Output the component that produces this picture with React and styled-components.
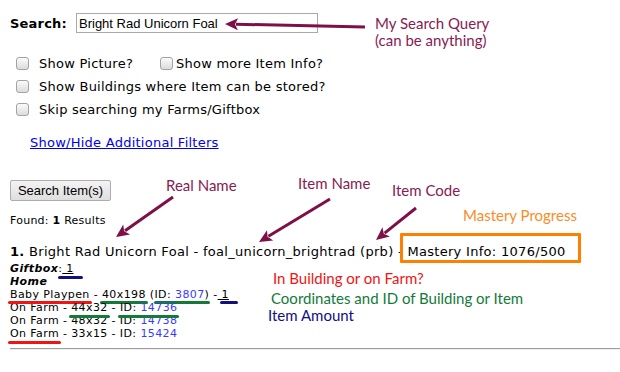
import React from 'react';
import styled, { createGlobalStyle } from 'styled-components';

const GlobalStyle = createGlobalStyle`
  html, body {
    margin: 0;
    padding: 0;
    background: #ffffff;
  }
`;

const Page = styled.div`
  position: relative;
  width: 620px;
  height: 372px;
  overflow: hidden;
  box-sizing: border-box;
  padding: 13px 0 0 10px;
  font-family: "DejaVu Sans", Verdana, sans-serif;
  color: #000;
`;

const SearchRow = styled.div`
  display: flex;
  align-items: center;
  height: 20px;
`;

const SearchLabel = styled.label`
  width: 66px;
  font-size: 13px;
  font-weight: bold;
  letter-spacing: 0.2px;
`;

const SearchInput = styled.input`
  width: 242px;
  height: 20px;
  box-sizing: border-box;
  margin: 0;
  padding: 0 2px;
  border: 1px solid #a9a9a9;
  font: 13px "Liberation Sans", Arial, sans-serif;
  color: #000;
  outline: none;
`;

const Options = styled.div`
  margin-top: 19px;
  padding-left: 6px;
  display: flex;
  flex-direction: column;
`;

const OptionRow = styled.div`
  display: flex;
  align-items: center;
  height: 23px;
  font-size: 13px;
  line-height: 16px;
  letter-spacing: 0.25px;
`;

const Option = styled.label`
  display: flex;
  align-items: center;
  width: ${(p) => (p.$width ? `${p.$width}px` : 'auto')};
`;

const Check = styled.input.attrs({ type: 'checkbox' })`
  appearance: none;
  box-sizing: border-box;
  width: 13px;
  height: 13px;
  margin: 0 ${(p) => (p.$tight ? 3 : 10)}px 0 0;
  border: 1px solid #a3a3a3;
  border-radius: 3px;
  background: linear-gradient(#fbfbfb, #dcdcdc);
`;

const FilterLink = styled.a`
  display: block;
  width: fit-content;
  margin: 14px 0 0 20px;
  font-size: 13px;
  line-height: 16px;
  letter-spacing: 0.25px;
  color: #0000ee;
  text-decoration: underline;
`;

const SearchButton = styled.button`
  display: block;
  width: 101px;
  height: 21px;
  margin: 29px 0 0;
  padding: 0;
  border: 1px solid #adadad;
  border-radius: 2px;
  background: linear-gradient(#f3f3f3, #dfdfdf);
  font: 13px "Liberation Sans", Arial, sans-serif;
  color: #000;
`;

const Found = styled.div`
  margin-top: 13px;
  font-size: 11px;
  line-height: 13px;
  letter-spacing: 0.25px;
`;

const ResultTitle = styled.div`
  margin-top: 17px;
  font-size: 13px;
  line-height: 16px;
  letter-spacing: 0.3px;
  white-space: nowrap;
`;

const Locations = styled.div`
  margin-top: 2px;
  font-size: 11px;
  line-height: 13px;
  letter-spacing: 0.4px;
  white-space: nowrap;
`;

const Heading = styled.span`
  font-weight: bold;
  font-style: italic;
`;

const Amount = styled.span`
  text-decoration: underline;
`;

const IdLink = styled.span`
  color: #3a3aff;
`;

const Divider = styled.hr`
  margin: 8px 0 0;
  border: 0;
  border-top: 1px solid #9d9d9d;
  border-bottom: 1px solid #eeeeee;
`;

/* annotation layer drawn over the screenshot */

const Mark = styled.span`
  position: relative;
  &::after {
    content: '';
    position: absolute;
    left: ${(p) => p.$l ?? -2}px;
    right: ${(p) => p.$r ?? -2}px;
    bottom: ${(p) => p.$b ?? -3}px;
    height: 3px;
    border-radius: 2px;
    background: ${(p) => p.$color};
  }
`;

const Mastery = styled.span`
  position: relative;
  &::after {
    content: '';
    position: absolute;
    left: -7px;
    right: -15px;
    top: -11px;
    bottom: -4px;
    border: 3px solid #ff7f00;
    border-radius: 1px;
  }
`;

const Callout = styled.span`
  position: absolute;
  left: ${(p) => p.$x}px;
  top: ${(p) => p.$y}px;
  font-family: Lato, "Open Sans", sans-serif;
  font-size: 15px;
  line-height: 17px;
  white-space: nowrap;
  color: ${(p) => p.$color || '#861c53'};
`;

const ArrowLayer = styled.svg`
  position: absolute;
  left: 0;
  top: 0;
  width: 620px;
  height: 372px;
  pointer-events: none;
`;

const RED = '#f01414';
const GREEN = '#137a3a';
const NAVY = '#10107f';
const ARROW = '#7d1147';

function Arrow({ from, to }) {
  const [x1, y1] = from;
  const [x2, y2] = to;
  const len = Math.hypot(x2 - x1, y2 - y1);
  const ux = (x2 - x1) / len;
  const uy = (y2 - y1) / len;
  const head = 13;
  const half = 6;
  const bx = x2 - ux * head;
  const by = y2 - uy * head;
  const pts = [
    [x2, y2],
    [bx - uy * half, by + ux * half],
    [x2 - ux * (head - 3), y2 - uy * (head - 3)],
    [bx + uy * half, by - ux * half],
  ]
    .map((p) => p.join(','))
    .join(' ');
  return (
    <g>
      <line x1={x1} y1={y1} x2={bx + ux * 2} y2={by + uy * 2} stroke={ARROW} strokeWidth="3" />
      <polygon points={pts} fill={ARROW} />
    </g>
  );
}

export default function App() {
  return (
    <>
      <GlobalStyle />
      <Page>
        <SearchRow>
          <SearchLabel>Search:</SearchLabel>
          <SearchInput defaultValue="Bright Rad Unicorn Foal" />
        </SearchRow>

        <Options>
          <OptionRow>
            <Option $width={144}>
              <Check />
              Show Picture?
            </Option>
            <Option>
              <Check $tight />
              Show more Item Info?
            </Option>
          </OptionRow>
          <OptionRow>
            <Option>
              <Check />
              Show Buildings where Item can be stored?
            </Option>
          </OptionRow>
          <OptionRow>
            <Option>
              <Check />
              Skip searching my Farms/Giftbox
            </Option>
          </OptionRow>
        </Options>

        <FilterLink href="#filters">Show/Hide Additional Filters</FilterLink>

        <SearchButton>Search Item(s)</SearchButton>

        <Found>
          Found: <b>1</b> Results
        </Found>

        <ResultTitle>
          <b>1.</b> Bright Rad Unicorn Foal - foal_unicorn_brightrad (prb) -{' '}
          <Mastery>Mastery Info: 1076/500</Mastery>
        </ResultTitle>

        <Locations>
          <div>
            <Heading>Giftbox</Heading>:
            <Mark $color={NAVY} $l={-4} $r={-9} $b={-4}>
              <Amount> 1</Amount>
            </Mark>
          </div>
          <div>
            <Heading>Home</Heading>
          </div>
          <div>
            <Mark $color={RED}>Baby Playpen</Mark> -{' '}
            <Mark $color={GREEN}>40x198</Mark>{' '}
            (<Mark $color={GREEN} $l={0} $r={-1}>ID: <IdLink>3807</IdLink>)</Mark> -
            <Mark $color={NAVY} $l={2} $r={-9}>
              <Amount> 1</Amount>
            </Mark>
          </div>
          <div>
            On Farm - <Mark $color={GREEN} $b={-4}>44x32</Mark> -{' '}
            <Mark $color={GREEN} $b={-4}>ID: <IdLink>14736</IdLink></Mark>
          </div>
          <div>
            On Farm - 48x32 - ID: <IdLink>14738</IdLink>
          </div>
          <div>
            <Mark $color={RED} $b={-4}>On Farm</Mark> - 33x15 - ID: <IdLink>15424</IdLink>
          </div>
        </Locations>

        <Divider />

        <ArrowLayer viewBox="0 0 620 372">
          <Arrow from={[365, 27]} to={[225, 24]} />
          <Arrow from={[173, 197]} to={[116, 237]} />
          <Arrow from={[330, 199]} to={[259, 242]} />
          <Arrow from={[416, 208]} to={[376, 240]} />
        </ArrowLayer>

        <Callout $x={375} $y={15}>
          My Search Query
          <br />
          (can be anything)
        </Callout>
        <Callout $x={166} $y={177}>Real Name</Callout>
        <Callout $x={298} $y={175}>Item Name</Callout>
        <Callout $x={392} $y={182}>Item Code</Callout>
        <Callout $x={463} $y={207} $color="#fa8c26">Mastery Progress</Callout>
        <Callout $x={273} $y={270} $color={RED}>In Building or on Farm?</Callout>
        <Callout $x={271} $y={290} $color={GREEN}>Coordinates and ID of Building or Item</Callout>
        <Callout $x={268} $y={307} $color={NAVY}>Item Amount</Callout>
      </Page>
    </>
  );
}
